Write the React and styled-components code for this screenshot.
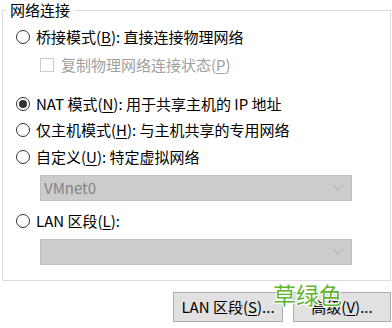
import React from "react";
import styled, { createGlobalStyle } from "styled-components";

const GlobalStyle = createGlobalStyle`
  html, body {
    margin: 0;
    padding: 0;
    background: #ffffff;
  }
  body {
    font-family: "Noto Sans CJK SC", "Microsoft YaHei", sans-serif;
    font-size: 15px;
    color: #000;
  }
`;

const Page = styled.div`
  position: relative;
  width: 392px;
  height: 328px;
  padding: 0 1px 0 2px;
  box-sizing: border-box;
  background: #fff;
  overflow: hidden;
`;

const Group = styled.fieldset`
  margin: 0;
  padding: 4px 0 15px 0;
  border: 1px solid #dcdcdc;
  display: flex;
  flex-direction: column;
  min-width: 0;
`;

const Legend = styled.legend`
  margin-left: 3px;
  padding: 0 4px;
  line-height: 20px;
  height: 20px;
  font-size: 15px;
`;

const Row = styled.label`
  display: flex;
  align-items: center;
  height: 26px;
  padding-left: ${(p) => p.$indent || 13}px;
  margin-top: ${(p) => p.$gap || 0}px;
  color: ${(p) => (p.$disabled ? "#a0a0a0" : "#000")};
  white-space: nowrap;
  line-height: 26px;
`;

const Radio = styled.span`
  width: 14px;
  height: 14px;
  box-sizing: border-box;
  border: 1px solid #333;
  border-radius: 50%;
  background: #fff;
  display: flex;
  align-items: center;
  justify-content: center;
  margin-right: 6px;
  flex-shrink: 0;

  &::after {
    content: "";
    width: 8px;
    height: 8px;
    border-radius: 50%;
    background: ${(p) => (p.$checked ? "#333" : "transparent")};
  }
`;

const Check = styled.span`
  width: 14px;
  height: 14px;
  box-sizing: border-box;
  border: 1px solid #cccccc;
  background: #fff;
  margin-right: 7px;
  flex-shrink: 0;
`;

const Key = styled.span`
  text-decoration: underline;
  text-underline-offset: 2px;
`;

const Combo = styled.div`
  display: flex;
  align-items: center;
  justify-content: space-between;
  box-sizing: border-box;
  width: 312px;
  height: 26px;
  margin-left: 37px;
  margin-top: ${(p) => p.$gap || 0}px;
  padding: 0 8px 0 3px;
  background: #cccccc;
  border: 1px solid #bfbfbf;
  color: #838383;
  line-height: 24px;
`;

const Chevron = () => (
  <svg width="10" height="6" viewBox="0 0 10 6">
    <path d="M0.5 0.5 L5 5 L9.5 0.5" fill="none" stroke="#a8a8a8" strokeWidth="1" />
  </svg>
);

const Buttons = styled.div`
  display: flex;
  justify-content: flex-end;
  gap: 10px;
  margin-top: 11px;
`;

const Button = styled.button`
  width: ${(p) => p.$w}px;
  height: 30px;
  box-sizing: border-box;
  padding: 0;
  background: #e1e1e1;
  border: 1px solid #adadad;
  font-family: inherit;
  font-size: 15px;
  color: #000;
  line-height: 28px;
`;

const Stamp = styled.div`
  position: absolute;
  left: 273px;
  top: 280px;
  font-size: 23px;
  line-height: 28px;
  color: #62b531;
  text-shadow: 1px 0 #fff, -1px 0 #fff, 0 1px #fff, 0 -1px #fff, 1px 1px #fff,
    -1px -1px #fff, 1px -1px #fff, -1px 1px #fff;
`;

export default function App() {
  return (
    <Page>
      <GlobalStyle />
      <Group>
        <Legend>网络连接</Legend>
        <Row>
          <Radio />
          桥接模式(<Key>B</Key>): 直接连接物理网络
        </Row>
        <Row $indent={37} $gap={2} $disabled>
          <Check />
          复制物理网络连接状态(<Key>P</Key>)
        </Row>
        <Row $gap={13}>
          <Radio $checked />
          NAT 模式(<Key>N</Key>): 用于共享主机的 IP 地址
        </Row>
        <Row>
          <Radio />
          仅主机模式(<Key>H</Key>): 与主机共享的专用网络
        </Row>
        <Row $gap={1}>
          <Radio />
          自定义(<Key>U</Key>): 特定虚拟网络
        </Row>
        <Combo $gap={5}>
          VMnet0
          <Chevron />
        </Combo>
        <Row $gap={7}>
          <Radio />
          LAN 区段(<Key>L</Key>):
        </Row>
        <Combo $gap={5}>
          <span />
          <Chevron />
        </Combo>
      </Group>
      <Buttons>
        <Button $w={110}>
          LAN 区段(<Key>S</Key>)...
        </Button>
        <Button $w={98}>
          高级(<Key>V</Key>)...
        </Button>
      </Buttons>
      <Stamp>草绿色</Stamp>
    </Page>
  );
}
